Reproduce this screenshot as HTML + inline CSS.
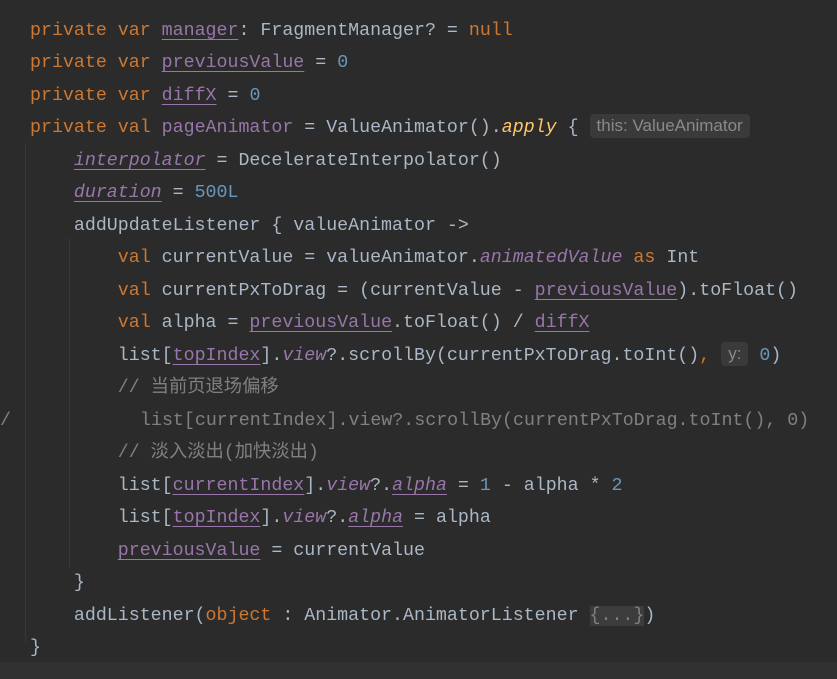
<!DOCTYPE html><html><head><style>
body{margin:0;width:837px;height:679px;background:#2b2b2b;overflow:hidden;position:relative;font-family:"Liberation Mono",monospace;font-size:18.3px;color:#a9b7c6}
.l{position:absolute;left:30px;white-space:pre;height:32px;line-height:32px}
.k{color:#cc7832}.p{color:#9876aa}.u{text-decoration:underline;text-underline-offset:4px;text-decoration-color:#9876aa}.i{font-style:italic}.n{color:#6897bb}.c{color:#808080}.a{color:#ffc66d;font-style:italic}
.h{display:inline-block;background:#3a3a3a;color:#8a8a8a;font-family:"Liberation Sans",sans-serif;font-size:17px;line-height:24px;border-radius:4px;padding:0 7px;vertical-align:1px}
.g{position:absolute;width:1px;background:#373737}
.f{background:#3c3c3c;color:#808080}
</style></head><body>
<div class="g" style="left:25px;top:143px;height:500px"></div>
<div class="g" style="left:69px;top:238px;height:330px"></div>
<div style="position:absolute;left:0;top:662px;width:837px;height:17px;background:#313131"></div>
<div class="l" style="top:15px"><span class="k">private var </span><span class="p u">manager</span>: FragmentManager? = <span class="k">null</span></div>
<div class="l" style="top:47px"><span class="k">private var </span><span class="p u">previousValue</span> = <span class="n">0</span></div>
<div class="l" style="top:80px"><span class="k">private var </span><span class="p u">diffX</span> = <span class="n">0</span></div>
<div class="l" style="top:112px"><span class="k">private val </span><span class="p">pageAnimator</span> = ValueAnimator().<span class="a">apply</span> { <span class="h">this: ValueAnimator</span></div>
<div class="l" style="top:145px">    <span class="p u i">interpolator</span> = DecelerateInterpolator()</div>
<div class="l" style="top:177px">    <span class="p u i">duration</span> = <span class="n">500L</span></div>
<div class="l" style="top:210px">    addUpdateListener { valueAnimator -&gt;</div>
<div class="l" style="top:242px">        <span class="k">val </span>currentValue = valueAnimator.<span class="p i">animatedValue</span> <span class="k">as</span> Int</div>
<div class="l" style="top:275px">        <span class="k">val </span>currentPxToDrag = (currentValue - <span class="p u">previousValue</span>).toFloat()</div>
<div class="l" style="top:307px">        <span class="k">val </span>alpha = <span class="p u">previousValue</span>.toFloat() / <span class="p u">diffX</span></div>
<div class="l" style="top:340px">        list[<span class="p u">topIndex</span>].<span class="p i">view</span>?.scrollBy(currentPxToDrag.toInt()<span class="k">,</span> <span class="h">y:</span> <span class="n">0</span>)</div>
<div class="l c" style="top:372px">        // 当前页退场偏移</div>
<div class="l c" style="top:405px;left:0">/</div>
<div class="l c" style="top:405px;left:140px">list[currentIndex].view?.scrollBy(currentPxToDrag.toInt(), 0)</div>
<div class="l c" style="top:437px">        // 淡入淡出(加快淡出)</div>
<div class="l" style="top:470px">        list[<span class="p u">currentIndex</span>].<span class="p i">view</span>?.<span class="p u i">alpha</span> = <span class="n">1</span> - alpha * <span class="n">2</span></div>
<div class="l" style="top:502px">        list[<span class="p u">topIndex</span>].<span class="p i">view</span>?.<span class="p u i">alpha</span> = alpha</div>
<div class="l" style="top:535px">        <span class="p u">previousValue</span> = currentValue</div>
<div class="l" style="top:567px">    }</div>
<div class="l" style="top:600px">    addListener(<span class="k">object</span> : Animator.AnimatorListener <span class="f">{...}</span>)</div>
<div class="l" style="top:632px">}</div>
</body></html>
